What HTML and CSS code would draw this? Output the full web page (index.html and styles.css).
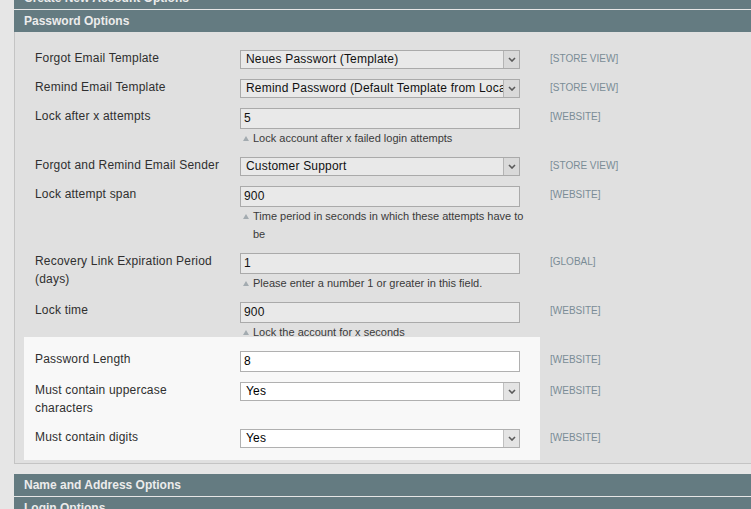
FILE: index.html
```html
<!DOCTYPE html>
<html lang="en">
<head>
<meta charset="utf-8">
<title>Password Options</title>
<link rel="stylesheet" href="styles.css">
</head>
<body>
<div class="page">
  <div class="section-head section-head-first">Create New Account Options</div>
  <div class="section-head">Password Options</div>
  <div class="fieldset">
    <div class="row">
      <div class="label">Forgot Email Template</div>
      <div class="value">
        <div class="select"><span class="select-val">Neues Passwort (Template)</span><span class="select-btn"><svg width="8" height="5" viewBox="0 0 8 5"><path d="M1 1 L4 4 L7 1" fill="none" stroke="#5a5a5a" stroke-width="1.6"/></svg></span></div>
      </div>
      <div class="scope">[STORE VIEW]</div>
    </div>
    <div class="row">
      <div class="label">Remind Email Template</div>
      <div class="value">
        <div class="select"><span class="select-val">Remind Password (Default Template from Loca</span><span class="select-btn"><svg width="8" height="5" viewBox="0 0 8 5"><path d="M1 1 L4 4 L7 1" fill="none" stroke="#5a5a5a" stroke-width="1.6"/></svg></span></div>
      </div>
      <div class="scope">[STORE VIEW]</div>
    </div>
    <div class="row">
      <div class="label">Lock after x attempts</div>
      <div class="value">
        <div class="input">5</div>
        <div class="note">Lock account after x failed login attempts</div>
      </div>
      <div class="scope">[WEBSITE]</div>
    </div>
    <div class="row">
      <div class="label">Forgot and Remind Email Sender</div>
      <div class="value">
        <div class="select"><span class="select-val">Customer Support</span><span class="select-btn"><svg width="8" height="5" viewBox="0 0 8 5"><path d="M1 1 L4 4 L7 1" fill="none" stroke="#5a5a5a" stroke-width="1.6"/></svg></span></div>
      </div>
      <div class="scope">[STORE VIEW]</div>
    </div>
    <div class="row">
      <div class="label">Lock attempt span</div>
      <div class="value">
        <div class="input">900</div>
        <div class="note">Time period in seconds in which these attempts have to be</div>
      </div>
      <div class="scope">[WEBSITE]</div>
    </div>
    <div class="row">
      <div class="label">Recovery Link Expiration Period (days)</div>
      <div class="value">
        <div class="input">1</div>
        <div class="note">Please enter a number 1 or greater in this field.</div>
      </div>
      <div class="scope">[GLOBAL]</div>
    </div>
    <div class="row">
      <div class="label">Lock time</div>
      <div class="value">
        <div class="input">900</div>
        <div class="note">Lock the account for x seconds</div>
      </div>
      <div class="scope">[WEBSITE]</div>
    </div>
    <div class="focus">
      <div class="row">
        <div class="label">Password Length</div>
        <div class="value">
          <div class="input">8</div>
        </div>
        <div class="scope">[WEBSITE]</div>
      </div>
      <div class="row">
        <div class="label">Must contain uppercase characters</div>
        <div class="value">
          <div class="select"><span class="select-val">Yes</span><span class="select-btn"><svg width="8" height="5" viewBox="0 0 8 5"><path d="M1 1 L4 4 L7 1" fill="none" stroke="#5a5a5a" stroke-width="1.6"/></svg></span></div>
        </div>
        <div class="scope">[WEBSITE]</div>
      </div>
      <div class="row">
        <div class="label">Must contain digits</div>
        <div class="value">
          <div class="select"><span class="select-val">Yes</span><span class="select-btn"><svg width="8" height="5" viewBox="0 0 8 5"><path d="M1 1 L4 4 L7 1" fill="none" stroke="#5a5a5a" stroke-width="1.6"/></svg></span></div>
        </div>
        <div class="scope">[WEBSITE]</div>
      </div>
    </div>
  </div>
  <div class="section-head section-head-after">Name and Address Options</div>
  <div class="section-head">Login Options</div>
</div>
</body>
</html>
```
FILE: styles.css
```css
html, body {
  margin: 0;
  padding: 0;
}
body {
  background: #e6e6e6;
  font-family: "Liberation Sans", Arial, sans-serif;
  font-size: 12px;
  color: #303030;
  overflow: hidden;
}
.page {
  margin-left: 14px;
  width: 800px;
}
.section-head {
  height: 22px;
  line-height: 22px;
  background: #647b81;
  color: #ececec;
  font-weight: bold;
  font-size: 12px;
  padding-left: 10px;
  margin-bottom: 1px;
  white-space: nowrap;
}
.section-head-first {
  margin-top: -13px;
}
.section-head-after {
  margin-top: 10px;
}
.fieldset {
  margin-top: -1px;
  background: #e0e0e0;
  border-left: 1px solid #c4c4c4;
  border-bottom: 1px solid #c4c4c4;
  padding: 13px 0 3px 9px;
}
.row {
  display: grid;
  grid-template-columns: 205px 280px auto;
  align-items: start;
  padding: 5px 0 5px 11px;
}
.label {
  padding-right: 17px;
  line-height: 18px;
  margin-top: -1px;
  padding-bottom: 2px;
  letter-spacing: 0.2px;
  color: #2f2f2f;
}
.value {
  min-width: 0;
}
.input {
  box-sizing: border-box;
  height: 21px;
  line-height: 19px;
  border: 1px solid #aaaaaa;
  background: #e9e9e9;
  padding-left: 3px;
  letter-spacing: 0.2px;
  color: #111;
}
.select {
  box-sizing: border-box;
  height: 19px;
  border: 1px solid #aaaaaa;
  background: #e9e9e9;
  display: flex;
  color: #111;
}
.select-val {
  flex: 1;
  min-width: 0;
  overflow: hidden;
  white-space: nowrap;
  line-height: 17px;
  padding-left: 5px;
  letter-spacing: 0.2px;
}
.select-btn {
  flex: none;
  width: 16px;
  height: 17px;
  box-sizing: border-box;
  border-left: 1px solid #b4b4b4;
  background: #d9d9d9;
  display: flex;
  align-items: center;
  justify-content: center;
}
.note {
  position: relative;
  font-size: 11px;
  line-height: 18px;
  padding-left: 13px;
  margin-right: -8px;
  color: #3a3a3a;
}
.note::before {
  content: "";
  position: absolute;
  left: 3px;
  top: 7px;
  border-left: 3.5px solid transparent;
  border-right: 3.5px solid transparent;
  border-bottom: 5px solid #a3abb0;
}
.scope {
  margin-left: 30px;
  font-size: 10px;
  line-height: 18px;
  color: #7a8c96;
  white-space: nowrap;
}
.focus {
  margin-top: -9px;
  padding: 9px 0 7px;
  background: linear-gradient(to right, #f8f8f8 516px, transparent 516px);
}
.focus .input,
.focus .select {
  background: #ffffff;
  border-color: #b0b0b0;
  color: #000;
}
.focus .select-btn {
  background: #e4e4e4;
  border-left-color: #c0c0c0;
}
```
